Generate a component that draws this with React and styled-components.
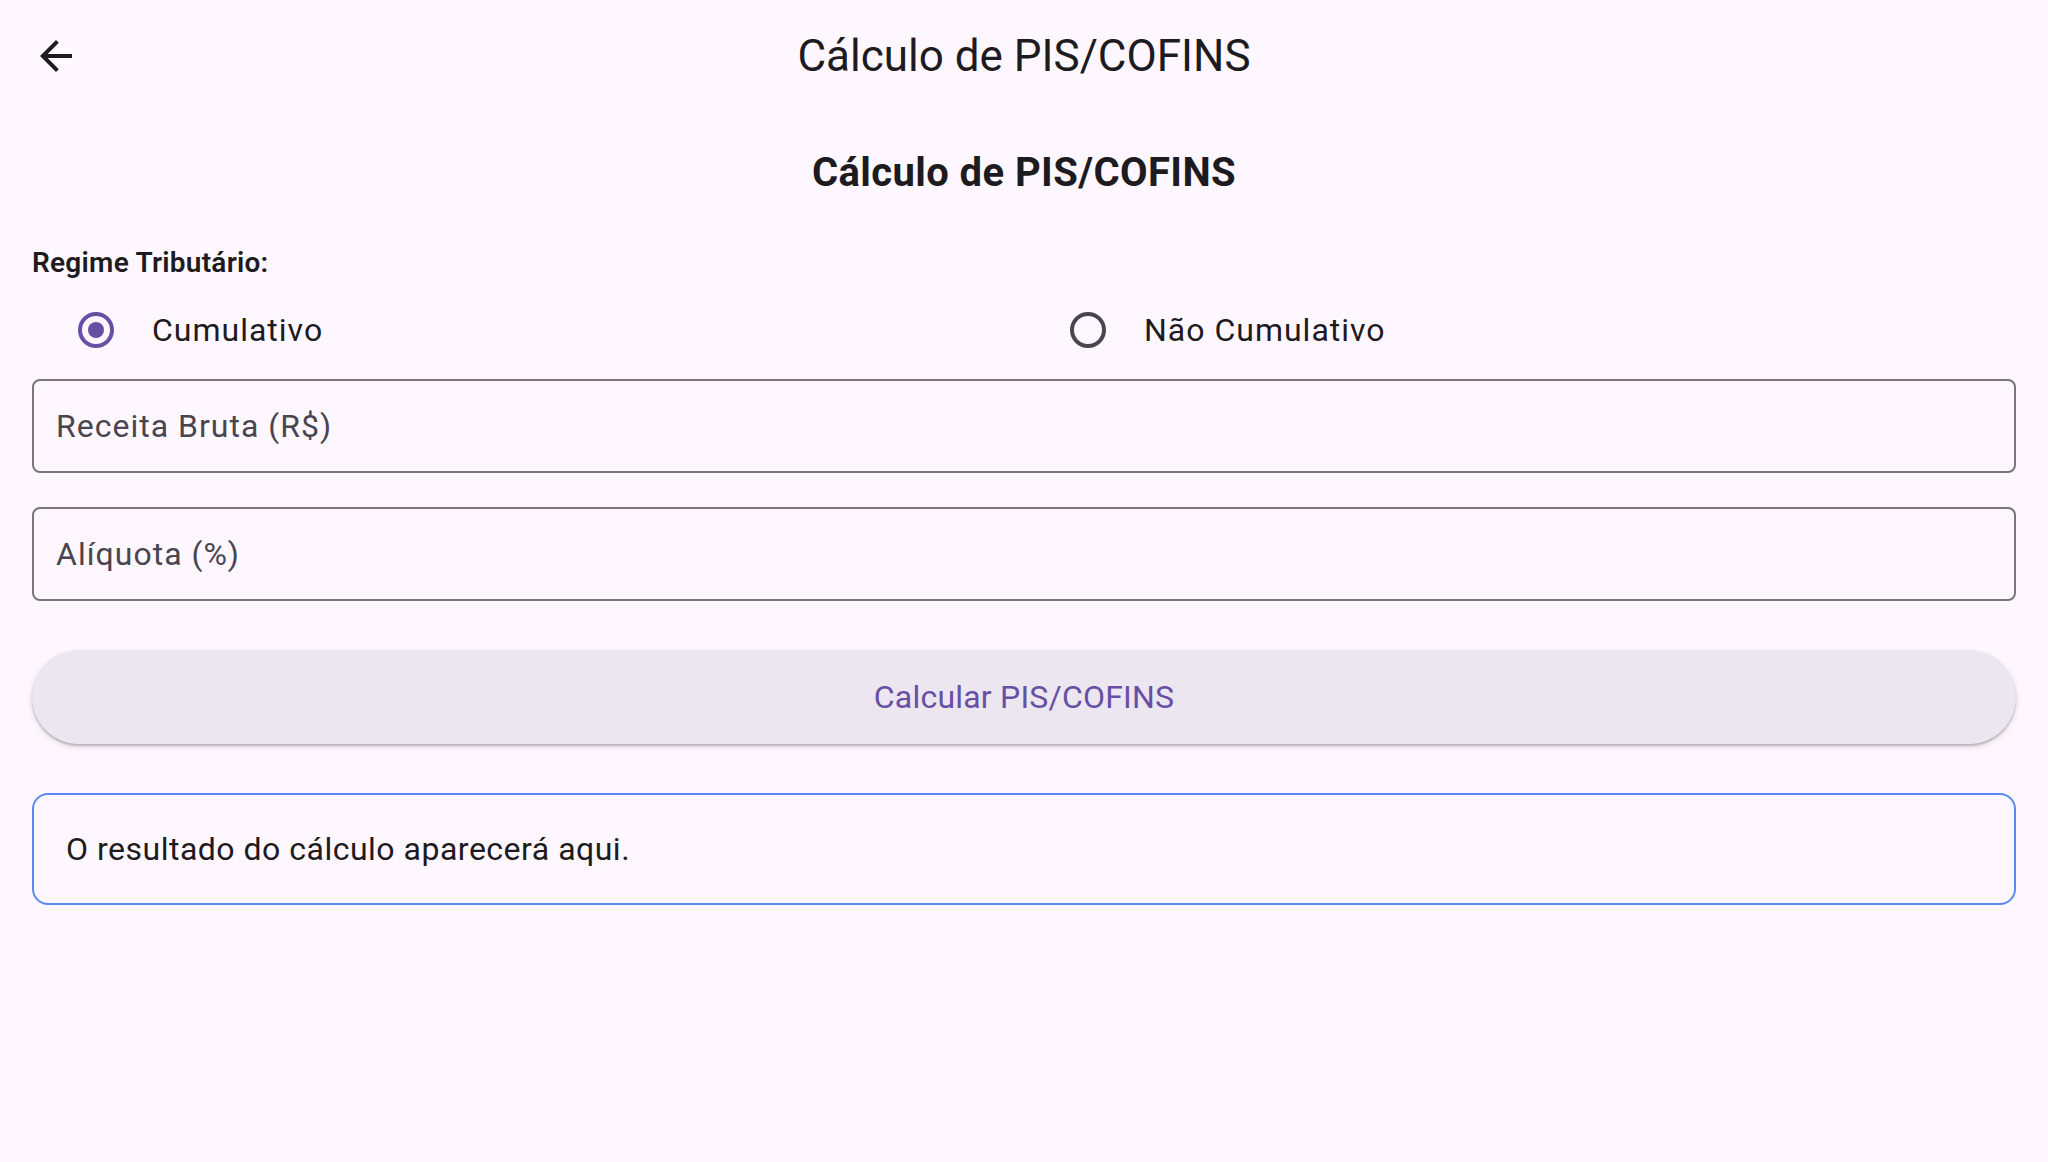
import React, { useState } from 'react'
import styled, { createGlobalStyle } from 'styled-components'

const GlobalStyle = createGlobalStyle`
html, body {
    margin: 0;
    padding: 0;
    background: #fef7ff;
}
* {
    box-sizing: border-box;
}
body {
    font-family: Roboto, "Noto Sans", "Liberation Sans", sans-serif;
    color: #1d1b20;
}
`

const Page = styled.div`
min-height: 100vh;
background: #fef7ff;
display: flex;
flex-direction: column;
`

const AppBar = styled.header`
height: 112px;
display: grid;
grid-template-columns: 112px 1fr 112px;
align-items: center;
`

const BackButton = styled.button`
width: 96px;
height: 96px;
margin-left: 8px;
border: none;
background: transparent;
display: flex;
align-items: center;
justify-content: center;
padding: 0;
color: #1d1b20;
cursor: pointer;
`

const AppTitle = styled.h1`
margin: 0;
text-align: center;
font-size: 44px;
font-weight: 400;
line-height: 56px;
color: #1d1b20;
`

const Body = styled.main`
padding: 34px 32px 32px;
display: flex;
flex-direction: column;
`

const Heading = styled.h2`
margin: 0;
text-align: center;
font-size: 40px;
font-weight: 700;
letter-spacing: 0.4px;
line-height: 54px;
`

const Label = styled.div`
margin-top: 43px;
font-size: 28px;
font-weight: 600;
letter-spacing: 0.25px;
line-height: 40px;
`

const RadioRow = styled.div`
height: 94px;
display: grid;
grid-template-columns: 1fr 1fr;
`

const Option = styled.label`
display: flex;
align-items: center;
padding-left: 46px;
gap: 38px;
font-size: 32px;
letter-spacing: 1px;
cursor: pointer;
`

const RadioCircle = styled.span`
width: 36px;
height: 36px;
border-radius: 50%;
border: 4px solid ${p => (p.$on ? '#6750a4' : '#49454f')};
display: flex;
align-items: center;
justify-content: center;
flex-shrink: 0;

&::after {
    content: '';
    width: 16px;
    height: 16px;
    border-radius: 50%;
    background: #6750a4;
    display: ${p => (p.$on ? 'block' : 'none')};
}
`

const Field = styled.input`
margin-top: ${p => p.$top}px;
height: 94px;
width: 100%;
border: 2px solid #79747e;
border-radius: 8px;
background: transparent;
padding: 0 22px;
font-family: inherit;
font-size: 32px;
letter-spacing: 1px;
color: #1d1b20;
outline: none;

&::placeholder {
    color: #49454f;
}
`

const CalcButton = styled.button`
margin-top: 49px;
height: 94px;
width: 100%;
border: none;
border-radius: 47px;
background: #ebe6f0;
color: #6750a4;
font-family: inherit;
font-size: 32px;
font-weight: 400;
letter-spacing: 0.2px;
box-shadow: 0 2px 2px rgba(0, 0, 0, 0.2), 0 3px 6px rgba(0, 0, 0, 0.12);
cursor: pointer;
`

const ResultBox = styled.div`
margin-top: 49px;
height: 112px;
border: 2px solid #5a8af0;
border-radius: 16px;
padding: 0 32px;
display: flex;
align-items: center;
font-size: 32px;
letter-spacing: 0.5px;
color: #1d1b20;
`

const options = ['Cumulativo', 'Não Cumulativo']

const App = () => {
    const [regime, setRegime] = useState('Cumulativo')

    return (
        <Page>
            <GlobalStyle />
            <AppBar>
                <BackButton aria-label="Voltar">
                    <svg width="48" height="48" viewBox="0 0 24 24" fill="currentColor">
                        <path d="M20 11H7.83l5.59-5.59L12 4l-8 8 8 8 1.41-1.41L7.83 13H20v-2z" />
                    </svg>
                </BackButton>
                <AppTitle>Cálculo de PIS/COFINS</AppTitle>
                <div />
            </AppBar>
            <Body>
                <Heading>Cálculo de PIS/COFINS</Heading>
                <Label>Regime Tributário:</Label>
                <RadioRow>
                    {options.map(o => (
                        <Option key={o} onClick={() => setRegime(o)}>
                            <RadioCircle $on={regime === o} />
                            {o}
                        </Option>
                    ))}
                </RadioRow>
                <Field $top={2} placeholder="Receita Bruta (R$)" />
                <Field $top={34} placeholder="Alíquota (%)" />
                <CalcButton>Calcular PIS/COFINS</CalcButton>
                <ResultBox>O resultado do cálculo aparecerá aqui.</ResultBox>
            </Body>
        </Page>
    )
}

export default App
